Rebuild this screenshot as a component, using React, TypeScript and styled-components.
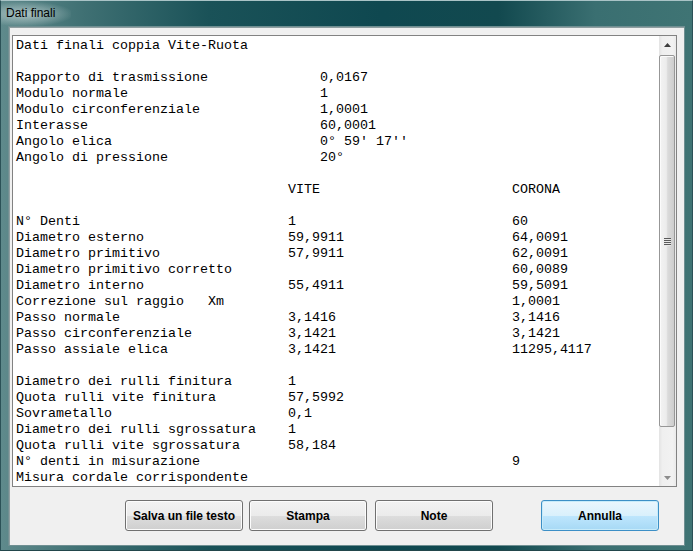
import React from "react";
import styled, { createGlobalStyle } from "styled-components";

const Global = createGlobalStyle`
  html, body { margin: 0; padding: 0; background: #ffffff; }
  body { width: 693px; height: 551px; overflow: hidden; }
`;

const Window = styled.div`
  width: 693px;
  height: 551px;
  box-sizing: border-box;
  display: flex;
  flex-direction: column;
  padding: 0 7px 4px 7px;
  background: linear-gradient(90deg, #5f8a8c 0%, #3f7073 12%, #1a5258 30%, #0f4850 55%, #12494f 72%, #3a6f71 86%, #3f7474 100%);
  border-top: 1px solid #a9c3c6;
  border-left: 1px solid #2b5157;
  border-right: 1px solid #2b5157;
  border-bottom: 1px solid #22464b;
  font-family: "Liberation Sans", Arial, sans-serif;
`;

const TitleBar = styled.div`
  height: 25px;
  display: flex;
  align-items: center;
  margin-left: -7px;
`;

const TitleText = styled.span`
  font-size: 12px;
  color: #000;
  padding: 0 16px 1px 5px;
  line-height: 23px;
  background: radial-gradient(ellipse at 35% 50%, rgba(225, 235, 235, 0.6) 0%, rgba(190, 208, 208, 0.35) 45%, rgba(150, 180, 180, 0) 75%);
`;

const Client = styled.div`
  flex: 1;
  display: flex;
  flex-direction: column;
  background: #f0f0f0;
  border: 1px solid #6f8f92;
  box-shadow: inset 1px 1px 0 #8f9ea0;
`;

const TextBox = styled.div`
  margin: 8px 7px 0 3px;
  height: 452px;
  box-sizing: border-box;
  border: 1px solid #828282;
  background: #ffffff;
  display: flex;
`;

const Content = styled.pre`
  flex: 1;
  margin: 0;
  padding: 2px 0 0 3px;
  font-family: "Liberation Mono", "Courier New", monospace;
  font-size: 13.333px;
  line-height: 16px;
  color: #000;
  white-space: pre;
  overflow: hidden;
`;

const ScrollBar = styled.div`
  width: 17px;
  display: flex;
  flex-direction: column;
  background: linear-gradient(90deg, #e3e3e3 0%, #efefef 20%, #f2f2f2 80%, #eaeaea 100%);
`;

const ArrowButton = styled.div`
  height: 17px;
  display: flex;
  align-items: center;
  justify-content: center;
`;

const Track = styled.div`
  flex: 1;
  display: flex;
  flex-direction: column;
`;

const Thumb = styled.div<{ $h: number }>`
  margin: 2px 1px 0 0;
  height: ${(p) => p.$h}px;
  box-sizing: border-box;
  border: 1px solid #979797;
  border-radius: 2px;
  background: linear-gradient(90deg, #f3f3f3 0%, #ececec 45%, #dbdbdb 55%, #cdcdcd 100%);
  box-shadow: inset 1px 1px 0 #fbfbfb;
  display: flex;
  align-items: center;
  justify-content: center;
`;

const Grip = styled.div`
  width: 7px;
  display: flex;
  flex-direction: column;
  gap: 1px;
  & > span {
    display: block;
    height: 1px;
    background: #5a5a5a;
    box-shadow: 0 1px 0 #e8e8e8;
  }
`;

const ButtonRow = styled.div`
  display: flex;
  margin-top: 13px;
  padding-left: 116px;
`;

const Button = styled.button<{ $gap: number; $default?: boolean }>`
  width: 118px;
  height: 31px;
  margin: 0 0 0 ${(p) => p.$gap}px;
  padding: 0;
  box-sizing: border-box;
  border-radius: 3px;
  font-family: "Liberation Sans", Arial, sans-serif;
  font-size: 12px;
  font-weight: bold;
  color: #000;
  border: 1px solid ${(p) => (p.$default ? "#3c8fc6" : "#707070")};
  background: ${(p) =>
    p.$default
      ? "linear-gradient(180deg, #eaf6fd 0%, #d9f0fc 50%, #bee6fd 51%, #a7d9f5 100%)"
      : "linear-gradient(180deg, #f2f2f2 0%, #ebebeb 50%, #dddddd 51%, #cfcfcf 100%)"};
  box-shadow: inset 0 0 0 1px ${(p) => (p.$default ? "#c7ebfa" : "#fcfcfc")};
`;

const L = 38;
const V = 34;
const C = 62;
const pad = (s: string, n: number) => (s.length >= n ? s : s + " ".repeat(n - s.length));
const row1 = (a: string, b: string) => pad(a, L) + b;
const row3 = (a: string, b = "", c = "") => (c ? pad(pad(a, V) + b, C) + c : pad(a, V) + b).replace(/\s+$/, "");

const lines: string[] = [
  "Dati finali coppia Vite-Ruota",
  "",
  row1("Rapporto di trasmissione", "0,0167"),
  row1("Modulo normale", "1"),
  row1("Modulo circonferenziale", "1,0001"),
  row1("Interasse", "60,0001"),
  row1("Angolo elica", "0° 59' 17''"),
  row1("Angolo di pressione", "20°"),
  "",
  row3("", "VITE", "CORONA"),
  "",
  row3("N° Denti", "1", "60"),
  row3("Diametro esterno", "59,9911", "64,0091"),
  row3("Diametro primitivo", "57,9911", "62,0091"),
  row3("Diametro primitivo corretto", "", "60,0089"),
  row3("Diametro interno", "55,4911", "59,5091"),
  row3("Correzione sul raggio   Xm", "", "1,0001"),
  row3("Passo normale", "3,1416", "3,1416"),
  row3("Passo circonferenziale", "3,1421", "3,1421"),
  row3("Passo assiale elica", "3,1421", "11295,4117"),
  "",
  row3("Diametro dei rulli finitura", "1"),
  row3("Quota rulli vite finitura", "57,5992"),
  row3("Sovrametallo", "0,1"),
  row3("Diametro dei rulli sgrossatura", "1"),
  row3("Quota rulli vite sgrossatura", "58,184"),
  row3("N° denti in misurazione", "", "9"),
  "Misura cordale corrispondente",
];

const Arrow = ({ up, color }: { up: boolean; color: string }) => (
  <svg width="7" height="4" viewBox="0 0 7 4">
    {up ? <polygon points="0,4 7,4 3.5,0" fill={color} /> : <polygon points="0,0 7,0 3.5,4" fill={color} />}
  </svg>
);

export default function App() {
  return (
    <>
      <Global />
      <Window>
        <TitleBar>
          <TitleText>Dati finali</TitleText>
        </TitleBar>
        <Client>
          <TextBox>
            <Content>{lines.join("\n")}</Content>
            <ScrollBar>
              <ArrowButton>
                <Arrow up color="#3d3d3d" />
              </ArrowButton>
              <Track>
                <Thumb $h={372}>
                  <Grip>
                    <span />
                    <span />
                    <span />
                    <span />
                  </Grip>
                </Thumb>
              </Track>
              <ArrowButton>
                <Arrow up={false} color="#8c8c8c" />
              </ArrowButton>
            </ScrollBar>
          </TextBox>
          <ButtonRow>
            <Button $gap={0}>Salva un file testo</Button>
            <Button $gap={6}>Stampa</Button>
            <Button $gap={8}>Note</Button>
            <Button $gap={48} $default>
              Annulla
            </Button>
          </ButtonRow>
        </Client>
      </Window>
    </>
  );
}
